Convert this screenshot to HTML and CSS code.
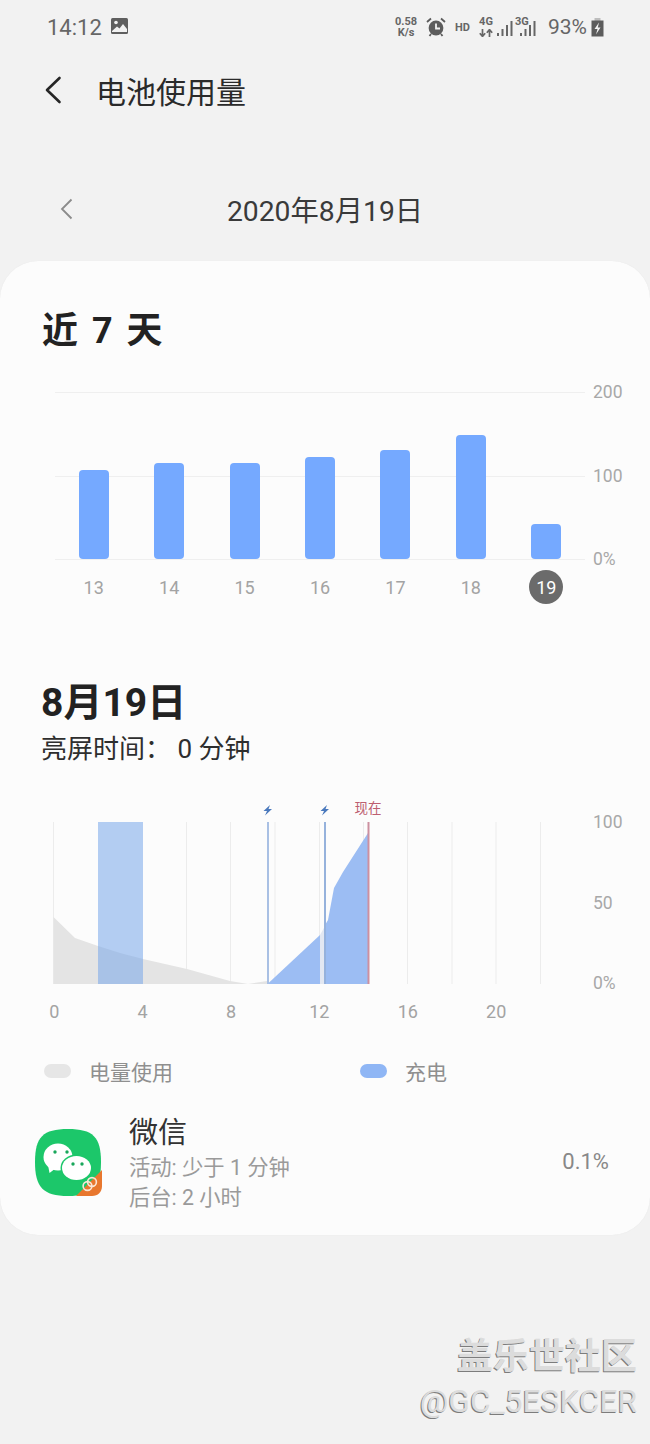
FILE: index.html
```html
<!DOCTYPE html>
<html lang="zh-CN">
<head>
    <meta charset="UTF-8">
    <meta name="viewport" content="width=device-width, initial-scale=1.0">
    <title>电池使用量</title>
    <link rel="stylesheet" href="styles.css">
</head>
<body>
    <div class="status-bar">
        <div class="status-left">
            <span class="clock">14:12</span>
            <svg class="status-pic" width="17" height="16" viewBox="0 0 17 16">
                <rect x="0" y="0" width="17" height="16" rx="1.5" fill="#5f5f5f"/>
                <circle cx="5" cy="4.5" r="1.8" fill="#f2f2f2"/>
                <path d="M1 13 L6 8.5 L8.5 10.5 L12 6 L16 11 V14 H1 Z" fill="#f2f2f2"/>
            </svg>
        </div>
        <div class="status-right">
            <div class="net-speed">
                <span>0.58</span>
                <span>K/s</span>
            </div>
            <svg class="status-alarm" width="20" height="20" viewBox="0 0 20 20">
                <circle cx="10" cy="11" r="7.4" fill="#5c5c5c"/>
                <path d="M10 6.5 V11.5 H14" fill="none" stroke="#f2f2f2" stroke-width="1.8"/>
                <path d="M1 5 L5 1.5 M19 5 L15 1.5 M5 17 L3.5 19 M15 17 L16.5 19" stroke="#5c5c5c" stroke-width="1.8"/>
            </svg>
            <span class="hd">HD</span>
            <div class="net-type">
                <span>4G</span>
                <svg width="14" height="8" viewBox="0 0 14 8">
                    <path d="M3.5 0 V7 M0.8 4.2 L3.5 7.4 L6.2 4.2 M10.5 8 V1 M7.8 3.8 L10.5 0.6 L13.2 3.8" fill="none" stroke="#666" stroke-width="1.7"/>
                </svg>
            </div>
            <svg class="signal-1" width="16" height="16" viewBox="0 0 16 16">
                <path d="M1 16 V13 M5.5 16 V9 M10 16 V5 M14.5 16 V1" stroke="#666" stroke-width="2"/>
            </svg>
            <span class="net-3g">3G</span>
            <svg class="signal-2" width="16" height="16" viewBox="0 0 16 16">
                <path d="M1 16 V13 M5.5 16 V9 M10 16 V5 M14.5 16 V1" stroke="#666" stroke-width="2"/>
            </svg>
            <span class="battery-pct">93%</span>
            <svg class="battery" width="13" height="19" viewBox="0 0 13 19">
                <rect x="3.5" y="0" width="6" height="3" fill="#bdbdbd"/>
                <rect x="0.5" y="2.5" width="12" height="16" fill="#5c5c5c"/>
                <path d="M8 4.5 L3.5 11 H6.5 L5 16.5 L9.5 9.5 H6.8 Z" fill="#f2f2f2"/>
            </svg>
        </div>
    </div>

    <div class="title-bar">
        <svg class="back-arrow" width="18" height="28" viewBox="0 0 18 28">
            <path d="M15.5 2 L3 14 L15.5 26" fill="none" stroke="#262626" stroke-width="2.6" stroke-linecap="round" stroke-linejoin="round"/>
        </svg>
        <h1>电池使用量</h1>
    </div>

    <div class="date-bar">
        <svg class="date-prev" width="13" height="22" viewBox="0 0 13 22">
            <path d="M11.5 1.5 L2 11 L11.5 20.5" fill="none" stroke="#8b8b8b" stroke-width="1.8"/>
        </svg>
        <span class="date-text">2020年8月19日</span>
    </div>

    <main class="card">
        <h2 class="week-title">近 7 天</h2>

        <div class="week-chart">
            <div class="week-plot">
                <div class="week-col"><div class="week-bar" style="height: 89px"></div></div>
                <div class="week-col"><div class="week-bar" style="height: 96px"></div></div>
                <div class="week-col"><div class="week-bar" style="height: 96px"></div></div>
                <div class="week-col"><div class="week-bar" style="height: 102px"></div></div>
                <div class="week-col"><div class="week-bar" style="height: 109px"></div></div>
                <div class="week-col"><div class="week-bar" style="height: 124px"></div></div>
                <div class="week-col"><div class="week-bar" style="height: 35px"></div></div>
            </div>
            <div class="y-labels week-y">
                <span>200</span>
                <span>100</span>
                <span>0%</span>
            </div>
        </div>
        <div class="week-days">
            <span>13</span>
            <span>14</span>
            <span>15</span>
            <span>16</span>
            <span>17</span>
            <span>18</span>
            <span class="today">19</span>
        </div>

        <h2 class="day-title">8月19日</h2>
        <p class="screen-time">亮屏时间： 0 分钟</p>

        <div class="day-chart">
            <svg class="day-svg" width="540" height="190" viewBox="50 800 540 190">
                <!-- hour grid -->
                <path d="M53.5 822 V984 M186.5 822 V984 M230.5 822 V984 M275 822 V984 M319.5 822 V984 M363.5 822 V984 M407.5 822 V984 M452 822 V984 M496 822 V984 M540.5 822 V984" stroke="#ececec" stroke-width="1"/>
                <!-- power used -->
                <path d="M53.5 917 L75 938 L98 946 L120 953 L143 959 L187 969 L230 981 L248 984 L267 981 V984 H53.5 Z" fill="#e4e4e4"/>
                <!-- charging -->
                <path d="M267.5 984 L320 935 V984 Z" fill="#9cbdf3"/>
                <path d="M320 984 V935 L325 926 V984 Z" fill="#e3e8f2"/>
                <path d="M325 984 V925 L328 920 L334 888 L343 872 L368 833 V984 Z" fill="#9cbdf3"/>
                <!-- band -->
                <rect x="98" y="822" width="45" height="162" fill="#76a5ea" fill-opacity="0.55"/>
                <!-- charge markers -->
                <rect x="267" y="822" width="2" height="162" fill="#a9c0e4"/>
                <rect x="324" y="822" width="2" height="162" fill="#96b2dc"/>
                <rect x="367.5" y="822" width="2" height="162" fill="#cc90a0"/>
                <path d="M270 805 L263.5 811 H267 L265 815.5 L272 809 H268.5 Z" fill="#4a79bd"/>
                <path d="M327 805 L320.5 811 H324 L322 815.5 L329 809 H325.5 Z" fill="#4a79bd"/>
                <text class="now-label" x="368" y="813" text-anchor="middle">现在</text>
            </svg>
            <div class="y-labels day-y">
                <span>100</span>
                <span>50</span>
                <span>0%</span>
            </div>
        </div>
        <div class="hours">
            <span>0</span>
            <span>4</span>
            <span>8</span>
            <span>12</span>
            <span>16</span>
            <span>20</span>
        </div>

        <div class="legend">
            <div class="legend-item legend-used">
                <span class="pill pill-grey"></span>
                <span>电量使用</span>
            </div>
            <div class="legend-item">
                <span class="pill pill-blue"></span>
                <span>充电</span>
            </div>
        </div>

        <div class="app-row">
            <svg class="app-icon" width="68" height="68" viewBox="0 0 68 68">
                <path d="M33 0 C58 0 66 8 66 33 C66 58 58 67 33 67 C8 67 0 58 0 33 C0 8 8 0 33 0 Z" fill="#1cc76a"/>
                <ellipse cx="23" cy="28" rx="14.5" ry="13.5" fill="#fff"/>
                <path d="M13 36 L14.5 44 L21 39 Z" fill="#fff"/>
                <ellipse cx="41.5" cy="39" rx="16" ry="13.5" fill="#1cc76a"/>
                <ellipse cx="41.5" cy="39" rx="14.5" ry="12" fill="#fff"/>
                <circle cx="20" cy="23" r="1.7" fill="#19a75b"/>
                <circle cx="32" cy="23" r="1.7" fill="#19a75b"/>
                <circle cx="38" cy="35" r="1.7" fill="#19a75b"/>
                <circle cx="47" cy="35" r="1.7" fill="#19a75b"/>
                <path d="M41 67 L67 41 V57 C67 63 63 67 57 67 Z" fill="#e8772e"/>
                <circle cx="52.5" cy="57" r="4.4" fill="none" stroke="#fbe6d6" stroke-width="1.6"/>
                <circle cx="57" cy="53" r="4.4" fill="none" stroke="#fbe6d6" stroke-width="1.6"/>
            </svg>
            <div class="app-info">
                <div class="app-name">微信</div>
                <div class="app-sub">活动: 少于 1 分钟</div>
                <div class="app-sub">后台: 2 小时</div>
            </div>
            <div class="app-pct">0.1%</div>
        </div>
    </main>

    <div class="watermark">
        <div class="watermark-main">盖乐世社区</div>
        <div class="watermark-user">@GC_5ESKCER</div>
    </div>
</body>
</html>
```

FILE: styles.css
```css
/* Battery usage page */
* {
    box-sizing: border-box;
}
html, body {
    height: 1444px;
    overflow: hidden;
}
body {
    margin: 0;
    background-color: #f2f2f2;
    color: #262626;
    font-family: Roboto, "Noto Sans CJK SC", sans-serif;
}

/* status bar */
.status-bar {
    display: flex;
    justify-content: space-between;
    align-items: center;
    height: 36px;
    margin-top: 9px;
    padding: 0 46px 0 47px;
    color: #666;
}
.status-left,
.status-right {
    display: flex;
    align-items: center;
}
.clock {
    font-size: 22px;
}
.status-pic {
    margin-left: 9px;
    margin-top: -2px;
}
.net-speed,
.net-type {
    display: flex;
    flex-direction: column;
    align-items: center;
    font-size: 11px;
    font-weight: 700;
}
.net-speed span,
.net-type span {
    height: 10px;
    line-height: 10px;
}
.net-speed {
    width: 24px;
    gap: 1px;
}
.net-type {
    gap: 2px;
    margin-left: 9px;
    width: 14px;
}
.status-alarm {
    margin-left: 8px;
}
.hd {
    margin-left: 9px;
    font-size: 11px;
    font-weight: 700;
}
.signal-1 {
    margin-left: 4px;
    margin-top: 2px;
}
.net-3g {
    margin-left: 2px;
    margin-bottom: 10px;
    width: 13px;
    height: 10px;
    line-height: 10px;
    font-size: 11px;
    font-weight: 700;
}
.signal-2 {
    margin-left: -8px;
    margin-top: 2px;
}
.battery-pct {
    margin-left: 12px;
    font-size: 21px;
}
.battery {
    margin-left: 4px;
}

/* title */
.title-bar {
    display: flex;
    align-items: center;
    height: 50px;
    margin-top: 20px;
    padding-left: 44px;
}
.title-bar h1 {
    margin: 0 0 0 34px;
    font-size: 30px;
    font-weight: 400;
    color: #2a2a2a;
}
.date-bar {
    position: relative;
    display: flex;
    justify-content: center;
    align-items: center;
    height: 40px;
    margin-top: 73px;
}
.date-prev {
    position: absolute;
    left: 60px;
    top: 10px;
}
.date-text {
    font-size: 28.3px;
    color: #3a3a3a;
}

/* card */
.card {
    margin-top: 33px;
    height: 974px;
    padding-top: 45px;
    background-color: #fcfcfc;
    border-radius: 38px;
    box-shadow: 0 0 1px #e2e2e2;
}
h2 {
    margin: 0;
    font-weight: 700;
    color: #222;
}
.week-title {
    height: 50px;
    padding-left: 42px;
    font-size: 36px;
    word-spacing: 5px;
    line-height: 50px;
}
.week-chart {
    display: flex;
    margin-top: 36px;
    padding-left: 55px;
}
.week-plot {
    display: grid;
    grid-template-columns: repeat(7, 1fr);
    align-items: end;
    width: 530px;
    height: 168px;
    padding: 0 1px;
    background:
        linear-gradient(#efefef, #efefef) 0 0 / 100% 1px no-repeat,
        linear-gradient(#efefef, #efefef) 0 84px / 100% 1px no-repeat,
        linear-gradient(#efefef, #efefef) 0 100% / 100% 1px no-repeat;
}
.week-col {
    display: flex;
    justify-content: center;
}
.week-bar {
    width: 30px;
    margin-bottom: 1px;
    background-color: #75a9ff;
    border-radius: 4px;
}
.y-labels {
    display: flex;
    flex-direction: column;
    justify-content: space-between;
    margin-left: 8px;
    color: #a8a8a8;
    font-size: 17.5px;
    line-height: 20px;
}
.week-y {
    height: 187px;
    margin-top: -10px;
}
.week-days {
    display: grid;
    grid-template-columns: repeat(7, 1fr);
    justify-items: center;
    align-items: center;
    width: 530px;
    margin-left: 55px;
    padding: 0 1px;
    margin-top: 1px;
    height: 34px;
    color: #a3a3a3;
    font-size: 18px;
}
.today {
    display: flex;
    justify-content: center;
    align-items: center;
    width: 34px;
    height: 34px;
    background-color: #6b6b6b;
    border-radius: 50%;
    color: #fff;
}
.day-title {
    margin-top: 74px;
    padding-left: 41px;
    height: 50px;
    font-size: 39px;
    line-height: 50px;
}
.screen-time {
    margin: 3px 0 0;
    padding-left: 41px;
    height: 36px;
    font-size: 26px;
    line-height: 36px;
    color: #2e2e2e;
}
.day-chart {
    display: flex;
    margin-top: 33px;
    padding-left: 50px;
}
.day-svg {
    display: block;
    flex-shrink: 0;
}
.now-label {
    font-size: 13.5px;
    fill: #bd5f70;
}
.day-y {
    height: 181px;
    margin-top: 12px;
    margin-left: 3px;
}
.hours {
    display: grid;
    grid-template-columns: repeat(6, 88.4px);
    margin-top: 5px;
    margin-left: 10px;
    height: 28px;
    color: #a3a3a3;
    font-size: 18px;
    line-height: 28px;
    justify-items: center;
}

/* legend */
.legend {
    display: flex;
    margin-top: 31px;
    padding-left: 44px;
    height: 28px;
    color: #8f8f8f;
    font-size: 21px;
}
.legend-item {
    display: flex;
    align-items: center;
}
.legend-used {
    width: 316px;
}
.pill {
    display: block;
    width: 27px;
    height: 14px;
    margin-right: 18px;
    border-radius: 7px;
}
.pill-grey {
    background-color: #e6e6e6;
}
.pill-blue {
    background-color: #8fb6f5;
}

/* app row */
.app-row {
    display: flex;
    align-items: center;
    margin-top: 29px;
    padding: 0 41px 0 35px;
}
.app-icon {
    flex-shrink: 0;
    margin-top: -2px;
}
.app-info {
    flex: 1;
    margin-left: 26px;
}
.app-name {
    font-size: 29px;
    line-height: 39px;
    color: #333;
}
.app-sub {
    font-size: 21.3px;
    line-height: 30px;
    color: #9a9a9a;
}
.app-pct {
    margin-top: -4px;
    font-size: 22px;
    color: #888;
}

/* watermark */
.watermark {
    display: flex;
    flex-direction: column;
    align-items: flex-end;
    margin-top: 99px;
    padding-right: 13px;
    color: #dcdcdc;
    text-shadow: -1px 1px 0 #7c7c7c;
}
.watermark-main {
    font-size: 36px;
    font-weight: 700;
    line-height: 46px;
}
.watermark-user {
    font-size: 31.7px;
    line-height: 43px;
}
```
